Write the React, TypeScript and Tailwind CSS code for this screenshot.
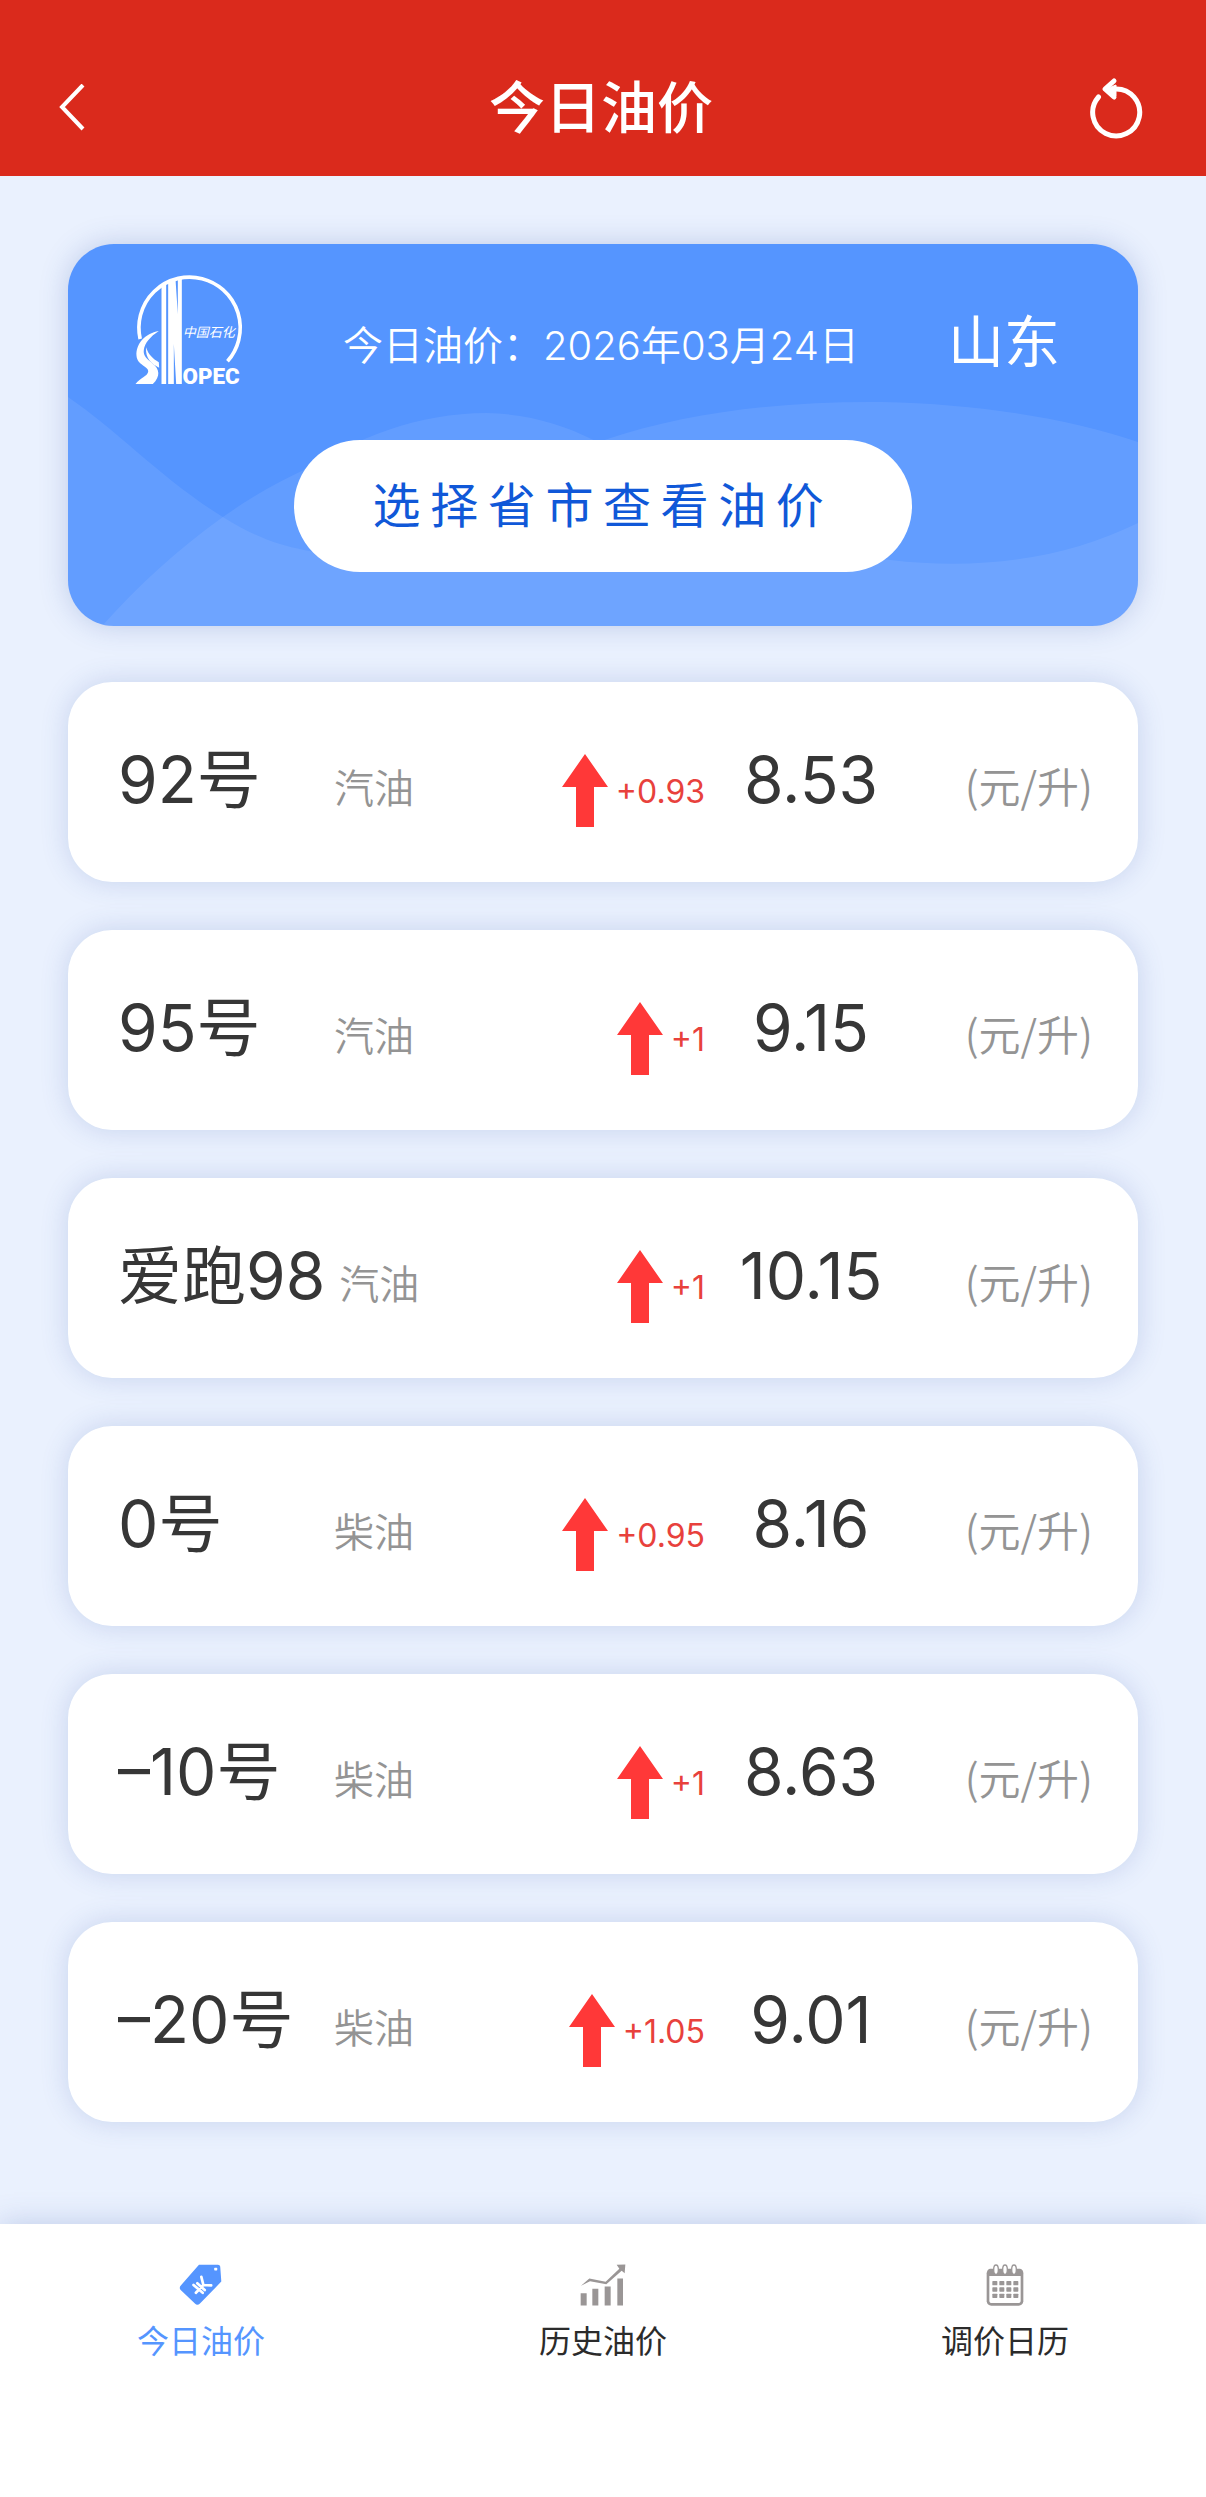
type Fuel = { grade: string; kind: string; delta: string; price: string };

const fuels: Fuel[] = [
  { grade: "92号", kind: "汽油", delta: "+0.93", price: "8.53" },
  { grade: "95号", kind: "汽油", delta: "+1", price: "9.15" },
  { grade: "爱跑98", kind: "汽油", delta: "+1", price: "10.15" },
  { grade: "0号", kind: "柴油", delta: "+0.95", price: "8.16" },
  { grade: "–10号", kind: "柴油", delta: "+1", price: "8.63" },
  { grade: "–20号", kind: "柴油", delta: "+1.05", price: "9.01" },
];

function BackIcon() {
  return (
    <svg width="28" height="48" viewBox="0 0 28 48" fill="none" stroke="#fff" strokeWidth="4" aria-hidden="true">
      <path d="M25 1 L4 23 L25 45" />
    </svg>
  );
}

function RefreshIcon() {
  return (
    <svg width="56" height="62" viewBox="0 0 56 62" fill="none" stroke="#fff" strokeWidth="5" aria-hidden="true">
      <path d="M27 12 A23.5 23.5 0 1 1 10.5 20" strokeLinecap="round" />
      <path d="M26 4 L17 12 L26 20" strokeLinecap="round" strokeLinejoin="round" />
      <path d="M18 12 L28 8 L28 19 Z" fill="#fff" strokeWidth="1" />
    </svg>
  );
}

function SinopecLogo() {
  return (
    <svg className="overflow-visible" width="107" height="111" viewBox="45 30 320 333" role="img" aria-label="中国石化 SINOPEC">
      <path d="M60 225 A152 152 0 1 1 322 292" fill="none" stroke="#fff" strokeWidth="11" />
      <path d="M116 201 C74 208 47 240 49 275 C51 305 88 306 84 324 C80 338 62 340 46 360 L98 360 C122 336 118 315 98 299 C82 285 68 276 71 257 C74 237 90 218 116 201 Z" fill="#fff" />
      <path d="M78 250 C84 272 98 284 116 295 L117 311 C96 302 74 284 78 250 Z" fill="#fff" />
      <path d="M124 62 L138 56 L138 360 L124 360 Z M144 54 L157 49 L157 360 L144 360 Z M155 50 L166 46 L173 150 L173 43 L185 42 L185 360 L168 360 L161 240 L161 360 L150 360 Z" fill="#fff" />
      <text x="188" y="219" fontSize="39" fontStyle="italic" fill="#fff" className="font-['Noto_Sans_CJK_SC',sans-serif] font-normal">中国石化</text>
      <text x="187" y="359" fontSize="67" fill="#fff" className="font-[Roboto,sans-serif] font-black">OPEC</text>
    </svg>
  );
}

function CardWaves() {
  return (
    <svg className="absolute inset-0 h-full w-full" viewBox="0 0 1071 382" preserveAspectRatio="none" aria-hidden="true">
      <g fill="#fff" fillOpacity="0.08">
        <path d="M0 153 C50 187 95 236 155 273 C185 292 210 301 236 306 C340 325 420 235 537 196 C620 168 715 157 815 158 C910 160 1000 174 1071 198 V382 H0 Z" />
        <path d="M34 382 C70 342 110 305 155 273 C185 252 210 238 236 226 C290 194 350 169 419 169 C460 170 495 180 526 196 C620 240 700 302 823 316 C915 327 1000 314 1071 279 V382 Z" />
      </g>
    </svg>
  );
}

function UpArrow() {
  return (
    <svg className="mt-[6px] -mb-4 ml-auto self-start" width="46" height="73" viewBox="0 0 46 73" role="img" aria-label="上涨">
      <path d="M23 0 L46 33 H32 V73 H14 V33 H0 Z" fill="#ff3838" />
    </svg>
  );
}

function TagIcon() {
  return (
    <svg width="44" height="42" viewBox="30 28 130 124" aria-hidden="true">
      <path d="M89 30 H145 Q152 30 152 38 L155 80 L92 145 Q84 152 77 145 L35 105 Q29 98 36 91 Z" fill="#5595ff" />
      <rect x="134" y="39" width="9" height="8" rx="2" fill="#fff" />
      <g stroke="#fff" strokeWidth="8" fill="none" strokeLinecap="round">
        <path d="M96 66 L102 90 L125 91 M102 90 L80 113 M73 90 L100 113 M84 85 L106 105" />
      </g>
    </svg>
  );
}

function ChartIcon() {
  return (
    <svg width="46" height="42" viewBox="32 29 138 125" aria-hidden="true">
      <path d="M34 116 H52 V153 H34 Z M69 103 H87 V153 H69 Z M106 96 H124 V153 H106 Z M144 72 H161 V153 H144 Z" fill="#9a9696" />
      <path d="M35 94 L60 72 L109 82 L150 43 L142 31 L168 30 L166 56 L157 49 L111 89 L62 80 Z" fill="#9a9696" />
    </svg>
  );
}

function CalendarIcon() {
  return (
    <svg width="38" height="42" viewBox="1248 28 114 126" aria-hidden="true">
      <path d="M1260 42 H1350 Q1360 44 1360 56 V140 Q1358 153 1346 153 H1264 Q1252 153 1250 140 V56 Q1251 44 1260 42 Z" fill="#9a9696" />
      <path d="M1258 64 H1352 V138 Q1352 145 1344 145 H1266 Q1258 145 1258 138 Z" fill="#fff" />
      <g fill="#fff" stroke="#9a9696" strokeWidth="4">
        <ellipse cx="1278" cy="45" rx="7" ry="14" />
        <ellipse cx="1305" cy="45" rx="7" ry="14" />
        <ellipse cx="1332" cy="45" rx="7" ry="14" />
      </g>
      <g fill="#9a9696">
        {[79, 98, 117].map((y) =>
          [1267, 1288, 1309, 1330].map((x) => <rect key={`${x}-${y}`} x={x} y={y} width="15" height="13" rx="2" />)
        )}
      </g>
    </svg>
  );
}

function FuelRow({ fuel }: { fuel: Fuel }) {
  return (
    <li className="flex items-baseline rounded-[44px] bg-white pt-[66px] pr-[45px] pb-[70px] pl-[50px] text-[#949494] shadow-[0_0_28px_rgba(60,90,170,0.2)]">
      <h2 className="mr-[14px] min-w-[202px] text-[64px] leading-[64px] whitespace-nowrap text-[#363636]">{fuel.grade}</h2>
      <span className="text-[40px] leading-[40px] font-[350]">{fuel.kind}</span>
      <UpArrow />
      <span className="ml-2 text-[32px] leading-[32px] text-[#e8413c]">{fuel.delta}</span>
      <span className="w-[212px] text-center text-[64px] leading-[64px] text-[#363636]">{fuel.price}</span>
      <span className="w-[176px] text-right font-['Noto_Sans_CJK_SC',sans-serif] text-[42px] leading-[40px] font-[350]">(元/升)</span>
    </li>
  );
}

const tabs = [
  { label: "今日油价", icon: <TagIcon />, active: true },
  { label: "历史油价", icon: <ChartIcon />, active: false },
  { label: "调价日历", icon: <CalendarIcon />, active: false },
];

export default function App() {
  return (
    <div className="flex min-h-screen flex-col bg-[#eaf1fe] font-[Inter,'Noto_Sans_CJK_SC',sans-serif]">
      <header className="grid grid-cols-[1fr_auto_1fr] items-center bg-[#da2a1c] pt-[77px] pr-[62px] pb-[37px] pl-[58px] text-white">
        <button type="button" aria-label="返回" className="justify-self-start">
          <BackIcon />
        </button>
        <h1 className="text-[56px] leading-[56px] font-medium">今日油价</h1>
        <button type="button" aria-label="刷新" className="justify-self-end">
          <RefreshIcon />
        </button>
      </header>

      <main className="flex flex-1 flex-col gap-14 px-[68px] pt-[68px] pb-[102px]">
        <section className="relative overflow-hidden rounded-[46px] bg-[#5595ff] shadow-[0_0_28px_rgba(60,90,170,0.25)]">
          <CardWaves />
          <div className="relative flex flex-col items-center pb-[54px]">
            <div className="flex w-full items-center justify-between pt-[30px] pr-[78px] pl-[67px]">
              <SinopecLogo />
              <p className="mt-8 ml-3 text-[40px] leading-[40px] font-[350] text-white">今日油价：2026年03月24日</p>
              <p className="mt-6 text-[56px] leading-[56px] text-white">山东</p>
            </div>
            <button
              type="button"
              className="mt-[55px] h-[132px] w-[618px] rounded-full bg-white text-[48px] leading-[48px] tracking-[0.2em] text-[#1058d8]"
            >
              选择省市查看油价
            </button>
          </div>
        </section>

        <ul className="flex flex-col gap-12">
          {fuels.map((fuel) => (
            <FuelRow key={fuel.grade} fuel={fuel} />
          ))}
        </ul>
      </main>

      <nav className="grid grid-cols-3 bg-white pt-10 pb-[137px] shadow-[0_0_28px_rgba(60,90,170,0.25)]">
        {tabs.map((tab) => (
          <a
            key={tab.label}
            href="#"
            aria-current={tab.active ? "page" : undefined}
            className={
              tab.active
                ? "flex flex-col items-center gap-[18px] text-[32px] leading-[36px] text-[#5595ff]"
                : "flex flex-col items-center gap-[18px] text-[32px] leading-[36px] text-[#2b2b2b]"
            }
          >
            {tab.icon}
            {tab.label}
          </a>
        ))}
      </nav>
    </div>
  );
}
